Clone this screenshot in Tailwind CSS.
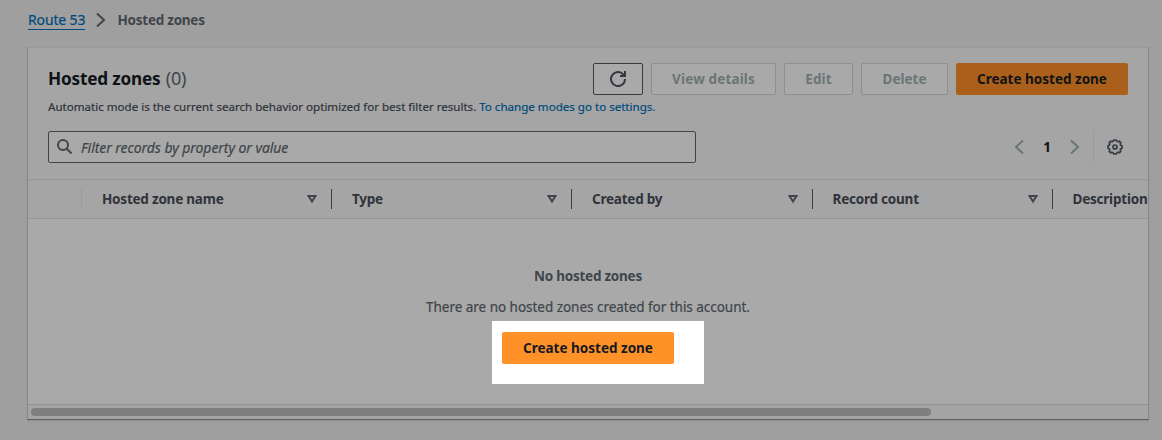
<!DOCTYPE html>
<html lang="en">
<head>
<meta charset="utf-8">
<title>Hosted zones</title>
<script src="https://cdn.jsdelivr.net/npm/@tailwindcss/browser@4"></script>
</head>
<body class="h-[440px] overflow-hidden bg-[#9f9f9f] font-['Noto_Sans','Open_Sans',sans-serif] text-[13.5px] leading-5 text-[#3f454a]">
<nav class="flex h-[47px] items-start pl-7 pt-[10px]">
  <a class="h-5 w-[57px] whitespace-nowrap border-b border-[#004b7d] text-[14px] leading-[20px] tracking-[-0.15px] text-[#004b7d] [-webkit-text-stroke:0.2px]">Route 53</a>
  <svg class="ml-[11px] mt-[2px] h-4 w-[10px]" viewBox="0 0 10 16" fill="none" stroke="#3f454a" stroke-width="2"><path d="M1 1.5 8 8 1 14.5"/></svg>
  <span class="ml-[11.5px] font-bold tracking-[-0.25px]">Hosted zones</span>
</nav>
<main class="ml-[27px] h-[373px] w-[1122px] overflow-hidden border border-t-0 border-x-[#858a89] border-b-[#5c6564] bg-[#a9a9a9] shadow-[0_1px_1px_#8d9291]">
  <header class="h-[132px] border-t border-[#999b9b] bg-[#a5a5a5] pl-5 pr-5 pt-[15px]">
    <div class="flex h-8 items-center gap-2">
      <h1 class="mr-auto whitespace-nowrap pb-[2px] text-[17.2px] font-bold leading-[30px] tracking-[-0.2px] text-[#0f1114]">Hosted zones <span class="ml-[1px] text-[18px] font-normal text-[#3f454a]">(0)</span></h1>
      <button class="flex h-8 w-[50px] items-center justify-center rounded-[2px] border border-[#363a42] bg-[#a9a9a9]">
        <svg class="h-4 w-4" viewBox="0 0 16 16" fill="none" stroke="#33373f" stroke-width="2"><path d="M15 8A7 7 0 1 1 12.500 2.700L14 4.200M15 0V5H10"/></svg>
      </button>
      <button class="h-8 w-[125px] rounded-[2px] border border-[#8b9090] bg-[#a9a9a9] font-bold tracking-[0.15px] text-[#6b7575]">View details</button>
      <button class="h-8 w-[69px] rounded-[2px] border border-[#8b9090] bg-[#a9a9a9] font-bold tracking-[0.15px] text-[#6b7575]">Edit</button>
      <button class="h-8 w-[87px] rounded-[2px] border border-[#8b9090] bg-[#a9a9a9] font-bold text-[#6b7575]">Delete</button>
      <button class="h-8 w-[172px] rounded-[2px] bg-[#aa601b] font-bold text-[#111315]">Create hosted zone</button>
    </div>
    <p class="mt-[4px] whitespace-nowrap text-[11.6px] leading-4 tracking-[-0.015px] text-[#2f333a] [-webkit-text-stroke:0.2px]">Automatic mode is the current search behavior optimized for best filter results. <a class="text-[#004b7d]">To change modes go to settings.</a></p>
    <div class="mt-4 flex h-8 items-center">
      <div class="flex h-8 w-[648px] items-center rounded-[2px] border border-[#3f454a] bg-[#a9a9a9] pl-2">
        <svg class="h-4 w-4" viewBox="0 0 16 16" fill="none" stroke="#3f454a" stroke-width="2"><circle cx="6" cy="6" r="5"/><path d="m9.5 9.5 5 5"/></svg>
        <span class="ml-2 pt-[2px] text-[14px] italic tracking-[-0.06px] [-webkit-text-stroke:0.2px]">Filter records by property or value</span>
      </div>
      <svg class="ml-[318px] h-4 w-[10px]" viewBox="0 0 10 16" fill="none" stroke="#6b7575" stroke-width="2"><path d="M9 1.5 2 8l7 6.5"/></svg>
      <span class="w-[46px] text-center font-bold text-[#0f1114]">1</span>
      <svg class="h-4 w-[10px]" viewBox="0 0 10 16" fill="none" stroke="#6b7575" stroke-width="2"><path d="M1 1.5 8 8l-7 6.5"/></svg>
      <span class="ml-[13px] h-8 w-px bg-[#999b9b]"></span>
      <svg class="ml-[13px] h-4 w-4" viewBox="0 0 16 16" fill="none" stroke="#363a42" stroke-width="1.700" stroke-linejoin="round"><path d="M6.700 1h2.600l.5 1.300 1.200.5 1.300-.6 1.500 1.500-.6 1.300.5 1.200 1.300.5v2.600l-1.300.5-.5 1.200.6 1.300-1.500 1.500-1.300-.6-1.200.5-.5 1.300H6.700l-.5-1.300-1.200-.5-1.300.6-1.500-1.500.6-1.300-.5-1.200L1 9.300V6.700l1.300-.5L2.800 5l-.6-1.300 1.500-1.500 1.300.6 1.200-.5z"/><circle cx="8" cy="8" r="2"/></svg>
    </div>
  </header>
  <div class="flex h-10 items-center overflow-hidden whitespace-nowrap border-y border-[#959797] bg-[#a5a5a5] font-bold tracking-[-0.22px] text-[#2f333a]">
    <div class="h-5 w-[54px] shrink-0 border-r border-[#999b9b]"></div>
    <div class="flex h-5 w-[250px] shrink-0 items-center justify-between border-r border-[#363a42] pl-5 pr-[14px]">Hosted zone name<svg class="h-[10px] w-[10px]" viewBox="0 0 10 10" fill="none" stroke="#3f454a" stroke-width="2"><path d="M1.500 2h7L5 7.500z"/></svg></div>
    <div class="flex h-5 w-[240px] shrink-0 items-center justify-between border-r border-[#363a42] pl-5 pr-[14px]">Type<svg class="h-[10px] w-[10px]" viewBox="0 0 10 10" fill="none" stroke="#3f454a" stroke-width="2"><path d="M1.500 2h7L5 7.500z"/></svg></div>
    <div class="flex h-5 w-[241px] shrink-0 items-center justify-between border-r border-[#363a42] pl-5 pr-[14px]">Created by<svg class="h-[10px] w-[10px]" viewBox="0 0 10 10" fill="none" stroke="#3f454a" stroke-width="2"><path d="M1.500 2h7L5 7.500z"/></svg></div>
    <div class="flex h-5 w-[240px] shrink-0 items-center justify-between border-r border-[#363a42] pl-[19.5px] pr-[14px]">Record count<svg class="h-[10px] w-[10px]" viewBox="0 0 10 10" fill="none" stroke="#3f454a" stroke-width="2"><path d="M1.500 2h7L5 7.500z"/></svg></div>
    <div class="shrink-0 pl-[19.5px]">Description</div>
  </div>
  <section class="flex h-[185px] flex-col items-center pt-[47px]">
    <p class="font-bold tracking-[-0.25px]">No hosted zones</p>
    <p class="mt-[11px] tracking-[-0.03px] [-webkit-text-stroke:0.2px]">There are no hosted zones created for this account.</p>
    <div class="ml-5 mt-[4px] h-[63px] w-[212px] shrink-0 bg-white pl-[10px] pt-[11px]">
      <button class="block h-8 w-[172px] rounded-[2px] bg-[#ff9129] font-bold text-[#16191f]">Create hosted zone</button>
    </div>
  </section>
  <div class="h-[15px] border-t border-[#939595] bg-[#a4a4a4] pl-[3px] pt-[3px]">
    <div class="h-2 w-[900px] rounded-full bg-[#7f7f7f]"></div>
  </div>
</main>
</body>
</html>
